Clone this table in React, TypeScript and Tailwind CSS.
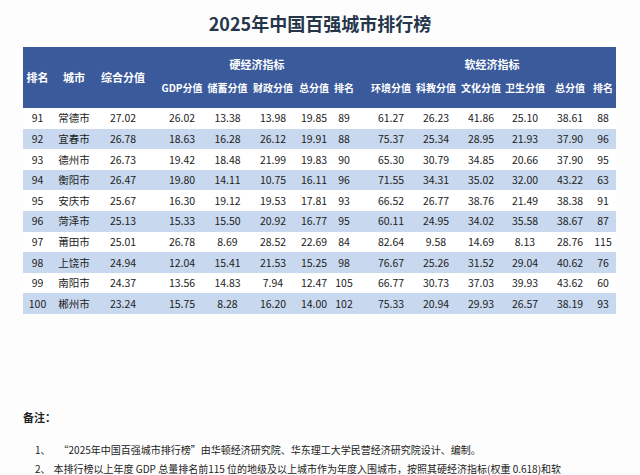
const cols = [
  "w-[29px]",
  "w-[44px]",
  "w-[54px]",
  "w-[56px] pl-[8px]",
  "w-[43px]",
  "w-[48px]",
  "w-[34px]",
  "w-[26px]",
  "w-[57px] pl-[11px]",
  "w-[44px]",
  "w-[46px]",
  "w-[42px]",
  "w-[48px]",
  "w-[22px] pr-[4px]",
]

const hardLabels = ["GDP分值", "储蓄分值", "财政分值", "总分值", "排名"]
const softLabels = ["环境分值", "科教分值", "文化分值", "卫生分值", "总分值", "排名"]

const rows = [
  ["91", "常德市", "27.02", "26.02", "13.38", "13.98", "19.85", "89", "61.27", "26.23", "41.86", "25.10", "38.61", "88"],
  ["92", "宜春市", "26.78", "18.63", "16.28", "26.12", "19.91", "88", "75.37", "25.34", "28.95", "21.93", "37.90", "96"],
  ["93", "德州市", "26.73", "19.42", "18.48", "21.99", "19.83", "90", "65.30", "30.79", "34.85", "20.66", "37.90", "95"],
  ["94", "衡阳市", "26.47", "19.80", "14.11", "10.75", "16.11", "96", "71.55", "34.31", "35.02", "32.00", "43.22", "63"],
  ["95", "安庆市", "25.67", "16.30", "19.12", "19.53", "17.81", "93", "66.52", "26.77", "38.76", "21.49", "38.38", "91"],
  ["96", "菏泽市", "25.13", "15.33", "15.50", "20.92", "16.77", "95", "60.11", "24.95", "34.02", "35.58", "38.67", "87"],
  ["97", "莆田市", "25.01", "26.78", "8.69", "28.52", "22.69", "84", "82.64", "9.58", "14.69", "8.13", "28.76", "115"],
  ["98", "上饶市", "24.94", "12.04", "15.41", "21.53", "15.25", "98", "76.67", "25.26", "31.52", "29.04", "40.62", "76"],
  ["99", "南阳市", "24.37", "13.56", "14.83", "7.94", "12.47", "105", "66.77", "30.73", "37.03", "39.93", "43.62", "60"],
  ["100", "郴州市", "23.24", "15.75", "8.28", "16.20", "14.00", "102", "75.33", "20.94", "29.93", "26.57", "38.19", "93"],
]

function Cell({ col, children }: { col: number; children: React.ReactNode }) {
  return <div className={`${cols[col]} flex shrink-0 justify-center whitespace-nowrap`}>{children}</div>
}

export default function App() {
  return (
    <div className="w-[640px] h-[475px] overflow-hidden bg-[#fdfdfd] font-['Noto_Sans_CJK_SC',sans-serif]">
      {/* Title */}
      <h1 className="pt-[12px] text-center text-[18px] font-bold leading-[22px] text-[#25364a]">
        2025年中国百强城市排行榜
      </h1>

      {/* Table */}
      <div className="ml-[23px] mt-[13px] w-[593px]">
        <div className="flex h-[61px] bg-[#3a5a9b] text-[11px] font-bold text-white">
          <div className="flex items-center">
            <Cell col={0}>排名</Cell>
            <Cell col={1}>城市</Cell>
            <Cell col={2}>综合分值</Cell>
          </div>
          <div className="flex flex-col">
            <div className="flex h-[34px] items-center justify-center pl-[7px]">硬经济指标</div>
            <div className="flex h-[14px] items-center text-[10px] leading-[14px]">
              {hardLabels.map((l, i) => (
                <Cell key={l + i} col={i + 3}>{l}</Cell>
              ))}
            </div>
          </div>
          <div className="flex flex-col">
            <div className="flex h-[34px] items-center justify-center pl-[11px]">软经济指标</div>
            <div className="flex h-[14px] items-center text-[10px] leading-[14px]">
              {softLabels.map((l, i) => (
                <Cell key={l + i} col={i + 8}>{l}</Cell>
              ))}
            </div>
          </div>
        </div>

        {rows.map((r, ri) => (
          <div
            key={r[0]}
            className={`flex h-[20.6px] items-center text-[10.5px] text-[#222222] ${ri % 2 === 1 ? "bg-[#c8d8ee]" : "bg-white"}`}
          >
            {r.map((v, ci) => (
              <Cell key={ci} col={ci}>{v}</Cell>
            ))}
          </div>
        ))}
      </div>

      {/* Notes */}
      <div className="mt-[96px] text-[#222222]">
        <div className="pl-[23px] text-[11px] font-bold leading-[14px]">备注：</div>
        <div className="mt-[19px] flex whitespace-nowrap pl-[35px] text-[10px] leading-[14px]">
          <span>1、</span>
          <span className="ml-[8px]">“2025年中国百强城市排行榜”由华顿经济研究院、华东理工大学民营经济研究院设计、编制。</span>
        </div>
        <div className="mt-[5px] flex whitespace-nowrap pl-[35px] text-[10px] leading-[14px]">
          <span>2、</span>
          <span className="ml-[3px]">本排行榜以上年度 GDP 总量排名前115 位的地级及以上城市作为年度入围城市，按照其硬经济指标(权重 0.618)和软</span>
        </div>
      </div>
    </div>
  )
}
